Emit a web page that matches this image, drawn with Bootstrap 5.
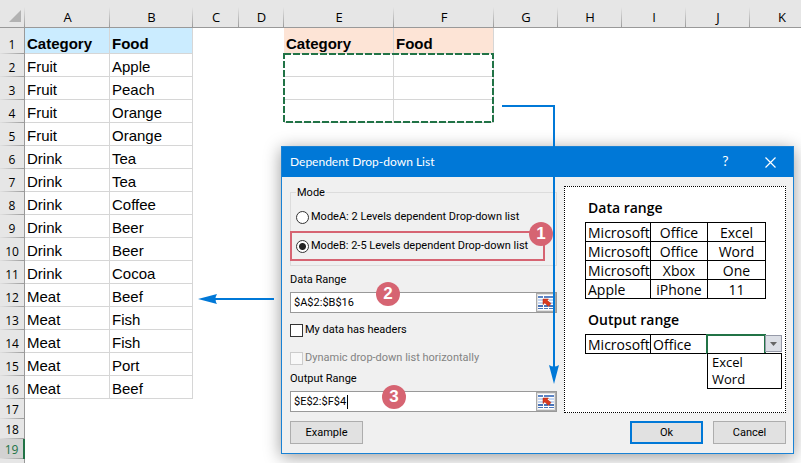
<!DOCTYPE html>
<html lang="en">
<head>
<meta charset="utf-8">
<meta name="viewport" content="width=device-width, initial-scale=1">
<title>Dependent Drop-down List</title>
<link href="https://cdn.jsdelivr.net/npm/bootstrap@5.3.0/dist/css/bootstrap.min.css" rel="stylesheet">
<style>
  :root { --accent: #0078d7; --pin: #d66472; --excel: #217346; --grid: #d6d6d6; }
  body { font-family: "Liberation Sans", Arial, sans-serif; color: #000; background: #fff; }
  .stage { min-height: 100vh; }

  /* worksheet */
  .sheet { table-layout: fixed; width: 814px; border-collapse: separate; border-spacing: 0; font-size: 15px; line-height: 18px; }
  .sheet th, .sheet td { padding: 0; vertical-align: bottom; white-space: nowrap; }
  .sheet thead th { height: 28px; padding-bottom: 1px; border-bottom: 1px solid #999; text-align: center; font: 400 13px/18px "Open Sans", sans-serif;
    background: linear-gradient(#e6e6e6, #9c9c9c) right 0 bottom 0 / 1px 20px no-repeat #e6e6e6; }
  .sheet tbody th { text-align: center; font: 400 12px/18px "Open Sans", sans-serif; border-right: 1px solid #999;
    background: linear-gradient(90deg, #e0e0e0, #9c9c9c) left bottom / 100% 1px no-repeat #e6e6e6; }
  .sheet tbody tr { height: 23px; }
  .sheet tbody tr.head-row { height: 26px; font-weight: 700; }
  .sheet tbody tr.short-row { height: 20px; }
  .sheet tbody tr.current th { background-color: #d2d2d2; color: var(--excel); border-right: 2px solid var(--excel); }
  .sheet td.cell { border-right: 1px solid var(--grid); border-bottom: 1px solid var(--grid); padding: 0 2px 0; }
  .sheet .blue { background: #cbecff; }
  .sheet .peach { background: #fde4d6; }
  .ants { position: absolute; left: -1px; top: -1px; z-index: 1; }

  /* dialog window */
  .window { left: 281px; top: 146px; width: 513px; border: 1px solid #1a82d4; background: #f0f0f0;
    box-shadow: 0 3px 16px rgba(0,0,0,.4); font: 12px/16px "Open Sans", sans-serif; }
  .title-bar { height: 30px; background: var(--accent); color: #fff; padding-left: 8px; font: 12px/16px Lato, sans-serif; }
  .title-bar button { width: 45px; height: 30px; border: 0; background: none; color: #fff; padding: 0 0 2px; font-size: 14px; }
  .window-body { padding: 9px 7px 9px 8px; font: 11px/16px Roboto, sans-serif; }
  .options { width: 267px; padding-bottom: 1px; }
  .options fieldset { border: 1px solid #dcdcdc; padding: 10px 0 11px 5px; }
  .options legend { float: none; width: auto; margin: 0; padding: 0 1px; font-size: 11px; line-height: 13px; }
  .option-b { margin-top: 13px; }
  .options input[type=radio], .options input[type=checkbox] { appearance: none; flex: none; width: 13px; height: 13px; margin: 0; border: 1px solid #333; background: #fff; }
  .options input[type=radio] { border-radius: 50%; }
  .options input[type=radio]:checked { background: radial-gradient(circle, #222 0 3px, #fff 4px); }
  .options input:disabled { border-color: #ccc; background: #f8f8f8; }
  .options .off { color: #838383; }
  .tick { gap: 2px; }
  .label-row { margin: 6px 0 4px; }
  .label-row.tight { margin-top: 5px; }
  .headers-row { margin-top: 9px; }
  .dynamic-row { margin-top: 12px; }
  .callout { position: absolute; left: -6px; top: -7px; width: 255px; height: 30px; border: 2px solid var(--pin); pointer-events: none; }
  .pin { position: absolute; width: 24px; height: 24px; border-radius: 50%; background: var(--pin); color: #fff; text-align: center; font: 700 17px/24px "Liberation Sans", sans-serif; }
  .pin-1 { right: -10px; top: -11px; }
  .pin-2 { left: 85px; top: -11px; }
  .pin-3 { left: 91px; top: -7px; }
  .field { height: 21px; border: 1px solid #999; background: #fff; }
  .field input { border: 0; outline: 0; background: none; padding: 0 3px; min-width: 0; color: #000; }
  .field button { width: 20px; height: 19px; padding: 0; border: 1px solid #aaa; background: #e2e2e2; line-height: 0; }
  .caret { position: absolute; left: 56px; top: 3px; width: 1px; height: 14px; background: #000; }
  .push { width: 73px; height: 23px; border: 1px solid #adadad; background: #e1e1e1; padding: 0; font-size: 11px; line-height: 16px; color: #000; border-radius: 0; }
  .push.main { border: 2px solid var(--accent); }

  /* sample pane */
  .sample { width: 222px; border: 1px dotted #000; background: #fff; padding: 11px 0 0 20px; font: 14px/18px "Open Sans", sans-serif; }
  .sample h2 { font: 600 14px/20px "Open Sans", sans-serif; margin: 0 0 4px; padding-left: 3px; }
  .sample h2.second { margin-top: 11px; }
  .sample table { width: 180px; table-layout: fixed; border-collapse: collapse; }
  .sample td { border: 1px solid #000; height: 19px; padding: 1px 0 0; line-height: 17px; text-align: center; white-space: nowrap; }
  .sample td.start { text-align: left; padding-left: 2px; }
  .picked { position: absolute; left: -2px; top: -1px; width: 60px; height: 20px; border: 2px solid var(--excel); border-bottom: 0; }
  .drop { position: absolute; left: 57px; top: 0; width: 17px; height: 17px; border: 1px solid #969aa8; background: #dcdfe6; padding: 0; line-height: 0; }
  .choices { position: absolute; left: -1px; top: 18px; width: 75px; border: 1px solid #000; background: #fff; font-size: 13px; line-height: 17px; text-align: left; }
  .choices li { padding-left: 4px; }

  .arrow { position: absolute; pointer-events: none; z-index: 5; }
  .arrow-down { left: 502px; top: 105px; }
  .arrow-left { left: 198px; top: 293px; }
</style>
</head>
<body>
<svg width="0" height="0" class="position-absolute" aria-hidden="true">
  <symbol id="pick" viewBox="0 0 16 15">
    <path fill="#fff" d="M0 0h16v15H0z"/>
    <path fill="#5c84c4" d="M0 1h16v2H0z"/>
    <path fill="#fff" d="M5 1h1v2H5z"/>
    <path fill="#c6d7f2" d="M0 4h5v2H0zM11 4h5v2h-5zM0 7h5v2H0zM11 7h5v2h-5z"/>
    <path fill="#4a74b8" d="M0 10h5v2H0zM6 10h4v2H6zM11 10h5v2h-5zM0 13h5v1H0zM6 13h4v1H6zM11 13h5v1h-5z"/>
    <path fill="#d93a20" stroke="#a82410" stroke-width=".5" d="M5 4h5.500L9.300 5.500l3.700 3-2.500 3-3.700-3.500L5 9.500z"/>
  </symbol>
</svg>
<main class="stage position-relative overflow-hidden">
  <table class="sheet">
    <colgroup><col style="width:25px"><col style="width:85px"><col style="width:83px"><col style="width:46px"><col style="width:45px"><col style="width:110px"><col style="width:100px"><col style="width:64px"><col style="width:64px"><col style="width:64px"><col style="width:64px"><col style="width:64px"></colgroup>
    <thead><tr>
      <th aria-label="Select all"><svg class="d-block ms-auto me-1 mb-1" width="12" height="12" aria-hidden="true"><path fill="#b2b2b2" d="M12 0v12H0z"/></svg></th>
      <th>A</th><th>B</th><th>C</th><th>D</th><th>E</th><th>F</th><th>G</th><th>H</th><th>I</th><th>J</th><th>K</th>
    </tr></thead>
    <tbody>
      <tr class="head-row"><th>1</th><td class="cell blue">Category</td><td class="cell blue">Food</td><td></td><td></td><td class="cell peach">Category</td><td class="cell peach">Food</td></tr>
      <tr><th>2</th><td class="cell">Fruit</td><td class="cell">Apple</td><td></td><td></td><td class="cell position-relative"><svg class="ants" width="211" height="70" aria-hidden="true"><rect x="1" y="1" width="209" height="68" fill="none" stroke="#217346" stroke-width="2" stroke-dasharray="7 2"/></svg></td><td class="cell"></td></tr>
      <tr><th>3</th><td class="cell">Fruit</td><td class="cell">Peach</td><td></td><td></td><td class="cell"></td><td class="cell"></td></tr>
      <tr><th>4</th><td class="cell">Fruit</td><td class="cell">Orange</td><td></td><td></td><td class="cell"></td><td class="cell"></td></tr>
      <tr><th>5</th><td class="cell">Fruit</td><td class="cell">Orange</td></tr>
      <tr><th>6</th><td class="cell">Drink</td><td class="cell">Tea</td></tr>
      <tr><th>7</th><td class="cell">Drink</td><td class="cell">Tea</td></tr>
      <tr><th>8</th><td class="cell">Drink</td><td class="cell">Coffee</td></tr>
      <tr><th>9</th><td class="cell">Drink</td><td class="cell">Beer</td></tr>
      <tr><th>10</th><td class="cell">Drink</td><td class="cell">Beer</td></tr>
      <tr><th>11</th><td class="cell">Drink</td><td class="cell">Cocoa</td></tr>
      <tr><th>12</th><td class="cell">Meat</td><td class="cell">Beef</td></tr>
      <tr><th>13</th><td class="cell">Meat</td><td class="cell">Fish</td></tr>
      <tr><th>14</th><td class="cell">Meat</td><td class="cell">Fish</td></tr>
      <tr><th>15</th><td class="cell">Meat</td><td class="cell">Port</td></tr>
      <tr><th>16</th><td class="cell">Meat</td><td class="cell">Beef</td></tr>
      <tr class="short-row"><th>17</th></tr>
      <tr class="short-row"><th>18</th></tr>
      <tr class="short-row current"><th>19</th></tr>
      <tr class="short-row"><th></th></tr>
    </tbody>
  </table>

  <section class="window position-absolute" role="dialog" aria-labelledby="dlg-title">
    <header class="title-bar d-flex align-items-center">
      <span id="dlg-title" class="me-auto">Dependent Drop-down List</span>
      <button type="button" aria-label="Help">?</button>
      <button type="button" aria-label="Close"><svg width="11" height="11" aria-hidden="true"><path stroke="#fff" stroke-width="1.200" d="M.5.500l10 10M10.500.500l-10 10"/></svg></button>
    </header>
    <form class="window-body">
      <div class="d-flex justify-content-between">
        <div class="options">
          <fieldset>
            <legend>Mode</legend>
            <div class="d-flex align-items-center tick">
              <input type="radio" name="mode" id="modeA"><label for="modeA">ModeA: 2 Levels dependent Drop-down list</label>
            </div>
            <div class="d-flex align-items-center tick option-b position-relative">
              <input type="radio" name="mode" id="modeB" checked><label for="modeB">ModeB: 2-5 Levels dependent Drop-down list</label>
              <span class="callout"><span class="pin pin-1">1</span></span>
            </div>
          </fieldset>
          <label for="dataRange" class="d-block label-row">Data Range</label>
          <div class="field d-flex position-relative">
            <input id="dataRange" class="flex-fill" type="text" value="$A$2:$B$16">
            <button type="button" aria-label="Select data range"><svg width="16" height="15"><use href="#pick"/></svg></button>
            <span class="pin pin-2">2</span>
          </div>
          <div class="d-flex align-items-center tick headers-row">
            <input type="checkbox" id="headers"><label for="headers">My data has headers</label>
          </div>
          <div class="d-flex align-items-center tick dynamic-row">
            <input type="checkbox" id="dynamic" disabled><label class="off" for="dynamic">Dynamic drop-down list horizontally</label>
          </div>
          <label for="outRange" class="d-block label-row tight">Output Range</label>
          <div class="field d-flex position-relative">
            <input id="outRange" class="flex-fill" type="text" value="$E$2:$F$4">
            <button type="button" aria-label="Select output range"><svg width="16" height="15"><use href="#pick"/></svg></button>
            <span class="caret"></span>
            <span class="pin pin-3">3</span>
          </div>
        </div>
        <div class="sample">
          <h2>Data range</h2>
          <table>
            <colgroup><col style="width:65px"><col style="width:57px"><col style="width:58px"></colgroup>
            <tr><td class="start">Microsoft</td><td>Office</td><td>Excel</td></tr>
            <tr><td class="start">Microsoft</td><td>Office</td><td>Word</td></tr>
            <tr><td class="start">Microsoft</td><td>Xbox</td><td>One</td></tr>
            <tr><td class="start">Apple</td><td>iPhone</td><td>11</td></tr>
          </table>
          <h2 class="second">Output range</h2>
          <table>
            <colgroup><col style="width:65px"><col style="width:57px"><col style="width:58px"></colgroup>
            <tr><td class="start">Microsoft</td><td class="start">Office</td><td class="position-relative"><span class="picked"></span>
              <button type="button" class="drop" aria-label="Open list"><svg width="7" height="4"><path fill="#666" d="M0 0h7L3.500 4z"/></svg></button>
              <ul class="choices list-unstyled mb-0"><li>Excel</li><li>Word</li></ul></td></tr>
          </table>
        </div>
      </div>
      <div class="d-flex mt-2">
        <button type="button" class="push me-auto">Example</button>
        <button type="submit" class="push main">Ok</button>
        <button type="button" class="push" style="margin-left:10px">Cancel</button>
      </div>
    </form>
  </section>

  <svg class="arrow arrow-down" width="58" height="280" aria-hidden="true"><path fill="none" stroke="#0078d7" stroke-width="2" d="M0 1h52v262"/><path fill="#0078d7" d="M47 260q5 3 10 0l-5 19z"/></svg>
  <svg class="arrow arrow-left" width="77" height="12" aria-hidden="true"><path stroke="#0078d7" stroke-width="2" d="M17 6h59"/><path fill="#0078d7" d="M19 1q-3 5 0 10L0 6z"/></svg>
</main>
<script src="https://cdn.jsdelivr.net/npm/bootstrap@5.3.0/dist/js/bootstrap.bundle.min.js"></script>
</body>
</html>
